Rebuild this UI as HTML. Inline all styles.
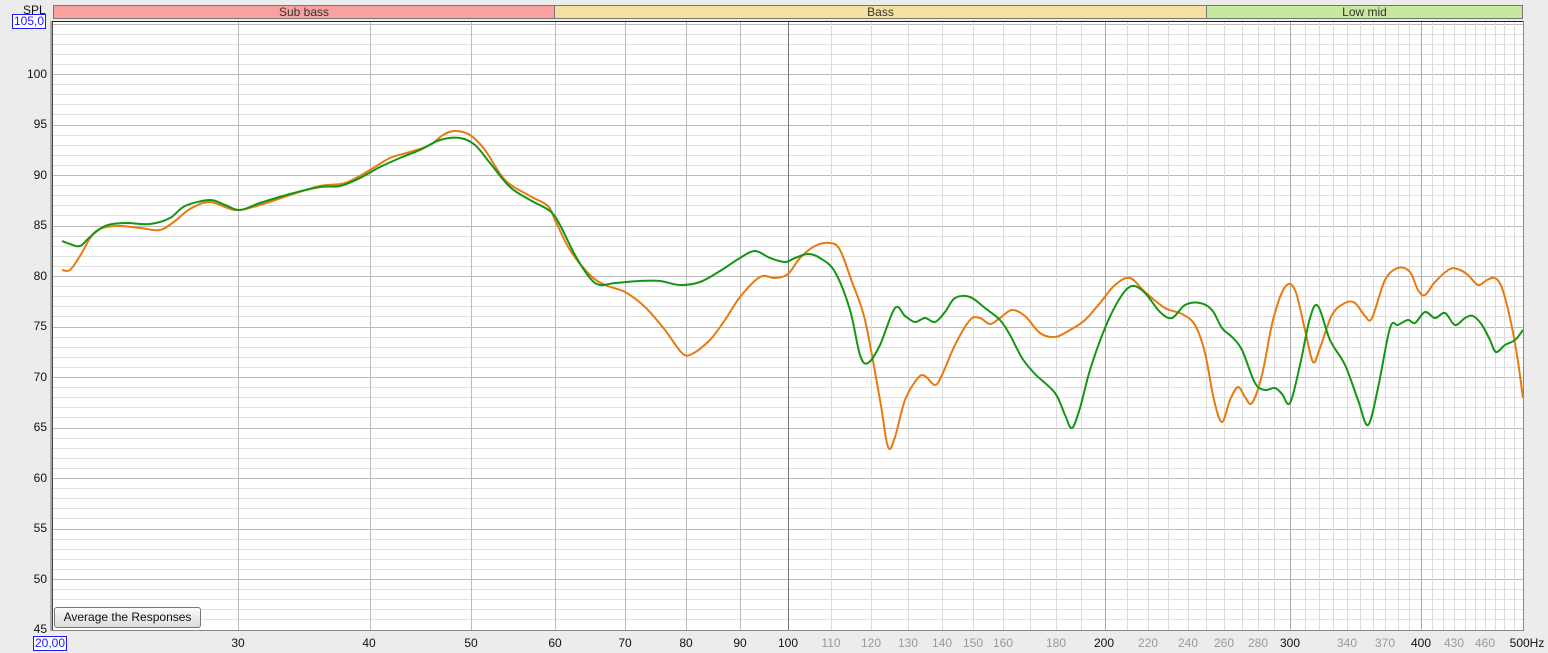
<!DOCTYPE html>
<html><head><meta charset="utf-8"><style>
html,body{margin:0;padding:0;}
body{width:1548px;height:653px;background:#ececec;position:relative;overflow:hidden;font-family:"Liberation Sans",sans-serif;font-size:12px;color:#111;}
.yl{position:absolute;right:1501px;text-align:right;line-height:12px;}
.xl{position:absolute;top:637px;width:40px;margin-left:-20px;text-align:center;line-height:12px;}
.g{color:#999;}
.band{position:absolute;top:5px;height:14px;border:1px solid #777;box-sizing:border-box;text-align:center;line-height:13px;font-size:12px;color:#333;}
.box{position:absolute;border:1px solid #1a1aff;background:#fff;color:#1a1aff;line-height:13px;padding:0 1px;font-size:12px;}
.btn{position:absolute;left:54px;top:607px;width:147px;height:21px;box-sizing:border-box;border:1px solid #777;border-radius:3px;background:linear-gradient(#fafafa,#dcdcdc);font-size:12px;text-align:center;line-height:19px;}
</style></head><body>
<div style="position:absolute;left:23px;top:3px;">SPL</div>
<div class="band" style="left:53px;width:502px;background:#f9a0a0;">Sub bass</div>
<div class="band" style="left:554px;width:653px;background:#f6e09f;">Bass</div>
<div class="band" style="left:1206px;width:317px;background:#c8e8a0;">Low mid</div>
<svg id="s" width="1548" height="653" style="position:absolute;left:0;top:0;">
<rect x="52" y="21" width="1471" height="609" fill="#fff"/>
<g id="grid"></g>
<path id="po" fill="none" stroke="#e87a10" stroke-width="2" stroke-linejoin="round" data-p="62,270 70,270 80,256 95,232 115,226 140,228 160,230 175,221 190,209 210,202 235,210 260,205 290,195 320,186 345,183 370,170 390,158 410,152 430,145 443,135 455,131 470,135 485,150 505,180 530,196 548,206 555,220 570,250 590,275 605,285 625,292 645,307 665,330 682,353 692,354 710,340 725,320 740,297 760,277 775,278 788,274 800,258 815,246 830,243 840,250 852,282 865,320 880,400 888,447 895,437 905,400 918,378 925,376 935,385 942,375 955,345 970,320 980,318 990,324 1000,318 1012,310 1025,316 1040,333 1055,337 1070,330 1085,320 1100,303 1115,285 1130,278 1145,292 1165,308 1182,314 1195,325 1205,353 1214,400 1222,422 1230,400 1238,387 1245,397 1252,403 1262,375 1273,320 1285,287 1295,290 1305,330 1313,362 1320,348 1332,315 1345,303 1355,303 1365,316 1372,318 1385,280 1398,268 1410,272 1418,290 1425,295 1435,282 1450,269 1460,270 1468,275 1478,285 1487,280 1495,278 1502,288 1510,318 1517,355 1523,398"/>
<path id="pg" fill="none" stroke="#149614" stroke-width="2" stroke-linejoin="round" data-p="62,241 70,244 80,246 90,237 105,226 125,223 150,224 170,218 185,206 210,200 225,205 240,210 260,203 290,194 320,187 340,186 360,178 380,167 400,158 420,150 440,140 460,138 475,145 490,163 510,187 530,200 550,211 560,225 575,255 590,278 600,285 615,283 640,281 660,281 680,285 700,282 720,271 740,258 755,251 770,258 785,262 795,258 808,254 820,258 835,272 850,310 860,355 868,363 880,345 895,308 905,316 915,322 925,318 935,322 945,312 955,298 970,297 985,308 1000,320 1010,335 1022,358 1035,374 1055,393 1065,415 1072,428 1080,408 1090,370 1105,328 1120,298 1132,286 1145,293 1160,312 1172,318 1185,305 1200,303 1212,310 1222,328 1232,337 1242,350 1255,383 1265,390 1275,388 1282,394 1290,403 1300,365 1310,318 1318,306 1330,340 1345,365 1358,400 1368,425 1378,388 1390,328 1398,325 1408,320 1415,323 1425,312 1435,318 1445,313 1455,325 1465,318 1473,316 1482,325 1490,340 1496,352 1505,345 1515,340 1523,330"/>
<line x1="52.5" y1="21" x2="52.5" y2="630" stroke="#444"/>
<line x1="52" y1="21.5" x2="1523" y2="21.5" stroke="#222"/>
<line x1="1523.5" y1="21" x2="1523.5" y2="630" stroke="#888"/>
<line x1="52" y1="630.5" x2="1524" y2="630.5" stroke="#888"/>
<line x1="51" y1="21" x2="51" y2="631" stroke="#aaa" stroke-width="2"/>
</svg>
<script>
(function(){var g=document.getElementById('grid'),h='';
function X(f){return 53+1051.5*Math.log10(f/20);}
for(var d=45;d<=105;d++){var y=Math.round(23.5+(105-d)*10.1)+0.5;h+='<line x1="53" x2="1523" y1="'+y+'" y2="'+y+'" stroke="'+(d%5==0?'#bbb':'#e0e0e0')+'"/>';}
for(var f=30;f<=490;f+=10){var x=Math.round(X(f))+0.5;var c=f<100?'#bbb':(f==100?'#777':(f%100==0?'#aaa':'#dcdcdc'));h+='<line y1="22" y2="630" x1="'+x+'" x2="'+x+'" stroke="'+c+'"/>';}
g.innerHTML=h;
['po','pg'].forEach(function(id){var el=document.getElementById(id);var p=el.getAttribute('data-p').split(' ').map(function(s){return s.split(',').map(Number);});
var d='M'+p[0][0]+','+p[0][1];for(var i=0;i<p.length-1;i++){var a=p[i-1]||p[i],b=p[i],c=p[i+1],e=p[i+2]||c;
d+=' C'+(b[0]+(c[0]-a[0])/6)+','+(b[1]+(c[1]-a[1])/6)+' '+(c[0]-(e[0]-b[0])/6)+','+(c[1]-(e[1]-b[1])/6)+' '+c[0]+','+c[1];}
el.setAttribute('d',d);});
})();
</script>
<div class="yl" style="top:68px">100</div>
<div class="yl" style="top:118px">95</div>
<div class="yl" style="top:169px">90</div>
<div class="yl" style="top:219px">85</div>
<div class="yl" style="top:270px">80</div>
<div class="yl" style="top:320px">75</div>
<div class="yl" style="top:371px">70</div>
<div class="yl" style="top:421px">65</div>
<div class="yl" style="top:472px">60</div>
<div class="yl" style="top:522px">55</div>
<div class="yl" style="top:573px">50</div>
<div class="yl" style="top:623px">45</div>
<div class="box" style="left:12px;top:14px;">105,0</div>
<div class="box" style="left:33px;top:636px;">20,00</div>
<div class="xl" style="left:238px">30</div>
<div class="xl" style="left:369px">40</div>
<div class="xl" style="left:471px">50</div>
<div class="xl" style="left:555px">60</div>
<div class="xl" style="left:625px">70</div>
<div class="xl" style="left:686px">80</div>
<div class="xl" style="left:740px">90</div>
<div class="xl" style="left:788px">100</div>
<div class="xl g" style="left:831px">110</div>
<div class="xl g" style="left:871px">120</div>
<div class="xl g" style="left:908px">130</div>
<div class="xl g" style="left:942px">140</div>
<div class="xl g" style="left:973px">150</div>
<div class="xl g" style="left:1003px">160</div>
<div class="xl g" style="left:1056px">180</div>
<div class="xl" style="left:1104px">200</div>
<div class="xl g" style="left:1148px">220</div>
<div class="xl g" style="left:1188px">240</div>
<div class="xl g" style="left:1224px">260</div>
<div class="xl g" style="left:1258px">280</div>
<div class="xl" style="left:1290px">300</div>
<div class="xl g" style="left:1347px">340</div>
<div class="xl g" style="left:1385px">370</div>
<div class="xl" style="left:1421px">400</div>
<div class="xl g" style="left:1454px">430</div>
<div class="xl g" style="left:1485px">460</div>
<div class="xl" style="left:1527px">500Hz</div>
<div class="btn">Average the Responses</div>
</body></html>
